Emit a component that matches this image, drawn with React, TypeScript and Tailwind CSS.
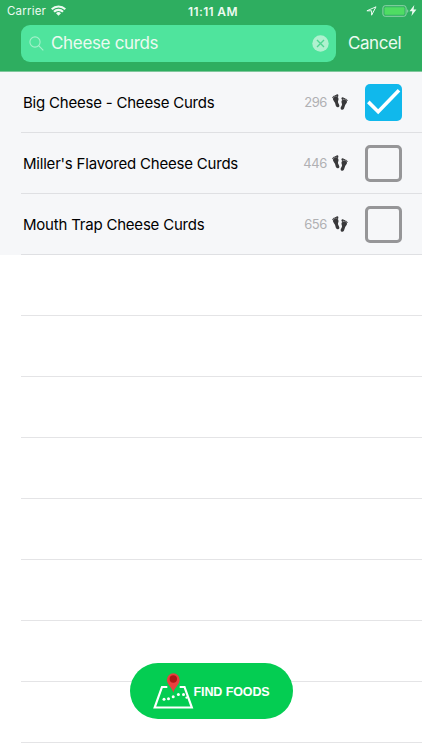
import React, { useState } from 'react';

interface Food {
  name: string;
  steps: number;
}

const FOODS: Food[] = [
  { name: 'Big Cheese - Cheese Curds', steps: 296 },
  { name: "Miller's Flavored Cheese Curds", steps: 446 },
  { name: 'Mouth Trap Cheese Curds', steps: 656 },
];

const EMPTY_ROWS = 9;

const StatusBar = () => (
  <div className="grid h-[21px] grid-cols-3 items-center pl-[7px] pr-[5px] text-[11.5px]">
    <div className="flex items-center gap-[5px]">
      <span className="pt-[2px] tracking-[0.2px]">Carrier</span>
      <svg className="h-[11px] w-[15px]" viewBox="0 0 15 11" fill="none" stroke="currentColor" strokeWidth="2.1">
        <path d="M0.7 4.3a9.6 9.6 0 0 1 13.6 0" />
        <path d="M3 6.8a6.3 6.3 0 0 1 9 0" />
        <path d="M7.5 10.8L5 8.3a3.6 3.6 0 0 1 5 0z" fill="currentColor" stroke="none" />
      </svg>
    </div>
    <span className="pl-[2px] pt-[2px] text-center text-[12px] font-semibold tracking-[0.35px]">11:11 AM</span>
    <div className="flex items-center justify-end">
      <svg className="mr-[5px] h-[10px] w-[11px]" viewBox="0 0 11 10" fill="none" stroke="currentColor" strokeLinejoin="round">
        <path d="M10 0.8L0.9 4.8H5.6V9.2z" />
      </svg>
      <svg className="h-[12px] w-[27px]" viewBox="0 0 27 12">
        <rect x="0.9" y="0.7" width="23.2" height="10.6" rx="2.3" fill="none" stroke="#8fd3a9" />
        <rect x="2.5" y="2.3" width="20" height="7.4" rx="1" fill="#4fdc63" />
        <path d="M25.2 4.2c1.5.5 1.5 3.1 0 3.6z" fill="#8fd3a9" />
      </svg>
      <svg className="h-[11px] w-[8px]" viewBox="0 0 7 10" fill="currentColor">
        <path d="M4.7 0L0.3 5.6h2.6L2.1 10l4.5-5.8H4z" />
      </svg>
    </div>
  </div>
);

const Footprints = () => (
  <svg className="h-[17px] w-[16px]" viewBox="0 0 16 17" fill="#38383a">
    {/* left foot */}
    <path d="M1.2 4C2.200 2.600 5.500 2.300 6.300 3.900c.8 1.600-.6 2.800-.3 4.300.3 1.300 1.700 2.400 1.300 4-.4 1.400-2.500 1.500-3.200.1-.6-1.300-.6-2.600-1.300-3.900C2.100 7.200.3 5.500 1.200 4z" />
    <ellipse cx="5.200" cy="1.700" rx="1.200" ry="1.400" />
    <circle cx="3.300" cy="1.900" r="0.850" />
    <circle cx="1.900" cy="2.500" r="0.750" />
    <circle cx="0.900" cy="3.500" r="0.650" />
    {/* right foot */}
    <path d="M14.800 6.900c-1-1.400-4.300-1.700-5.100-.1-.8 1.500.5 2.600.3 4-.3 1.300-1.700 2.400-1.300 3.900.4 1.400 2.500 1.500 3.200.1.600-1.300.6-2.600 1.300-3.900.7-1.200 2.500-2.500 1.600-4z" />
    <ellipse cx="10.700" cy="4.600" rx="1.200" ry="1.400" />
    <circle cx="12.600" cy="4.800" r="0.850" />
    <circle cx="14" cy="5.400" r="0.750" />
    <circle cx="15" cy="6.400" r="0.650" />
  </svg>
);

const MapIcon = () => (
  <svg className="h-[38px] w-[41px] shrink-0" viewBox="0 0 41 38" fill="none">
    <path d="M14.300 15H9L1.700 35.500H38.800L31.500 15H26.700" stroke="#fff" strokeWidth="2.200" />
    <g fill="#fff">
      <circle cx="11" cy="27.300" r="1.500" />
      <circle cx="15.500" cy="26.800" r="1.500" />
      <circle cx="20.200" cy="24.700" r="1.500" />
      <circle cx="25.400" cy="22.500" r="1.500" />
      <circle cx="30.500" cy="22.500" r="1.500" />
      <circle cx="33.600" cy="25.600" r="1.200" />
    </g>
    <path d="M20.300 20.700C19 15.500 13.900 12.500 13.900 7.800a6.400 6.600 0 0 1 12.800 0C26.700 12.500 21.600 15.500 20.300 20.700z" fill="#e93f3f" />
    <circle cx="20.300" cy="7" r="3.700" fill="#ac1616" />
  </svg>
);

const Checkbox = ({ checked, onClick }: { checked: boolean; onClick: () => void }) => (
  <button
    type="button"
    role="checkbox"
    aria-checked={checked}
    onClick={onClick}
    className={`h-[37px] w-[37px] shrink-0 rounded-[5px] ${checked ? 'bg-[#10b8ec]' : 'border-[3px] border-[#969698]'}`}
  >
    {checked && (
      <svg className="h-[37px] w-[37px]" viewBox="0 0 37 37" fill="none" stroke="#fff" strokeWidth="3.6">
        <path d="M3.300 17.900L13.200 27.700L34 6.300" />
      </svg>
    )}
  </button>
);

const App: React.FC = () => {
  const [query, setQuery] = useState('Cheese curds');
  const [selected, setSelected] = useState<string[]>([FOODS[0].name]);

  const toggle = (name: string) => {
    setSelected((prev) => (prev.includes(name) ? prev.filter((n) => n !== name) : [...prev, name]));
  };

  return (
    <div className="relative h-[750px] w-[422px] overflow-hidden bg-white font-['Inter',sans-serif]">
      {/* Header */}
      <header className="h-[72px] border-b border-[#7fc79c] bg-[#2eae60] text-[#ecfaf1]">
        <StatusBar />
        <div className="flex items-center pl-[21px] pt-[3.5px]">
          <div className="flex h-[37px] w-[315px] items-center rounded-[9px] bg-[#4fe49d] pl-[8px] pr-[7px]">
            <svg className="h-[15px] w-[15px] shrink-0" viewBox="0 0 15 15" fill="none" stroke="#a5f1cb" strokeWidth="1.100">
              <circle cx="6" cy="6" r="5.100" />
              <path d="M9.700 9.700L14.300 14.300" />
            </svg>
            <input
              className="ml-[7px] w-full min-w-0 bg-transparent pt-[2px] text-[17px] tracking-[-0.33px] outline-none"
              value={query}
              onChange={(e) => setQuery(e.target.value)}
            />
            <button type="button" onClick={() => setQuery('')} className="shrink-0">
              <svg className="h-[17px] w-[17px]" viewBox="0 0 17 17">
                <circle cx="8.500" cy="8.500" r="8.200" fill="#aff1cf" />
                <path d="M5 5l7 7M12 5l-7 7" stroke="#4fd692" strokeWidth="1.400" />
              </svg>
            </button>
          </div>
          <button type="button" className="ml-[12px] pt-[2px] text-[17px] tracking-[-0.45px]">Cancel</button>
        </div>
      </header>

      {/* Results */}
      <ul>
        {FOODS.map((food) => (
          <li key={food.name} className="h-[61px] bg-[#f6f7f9] pl-[21px]">
            <div className="flex h-full items-center border-b border-[#dfe0e3] pl-[2px] pr-[20.5px]">
              <span className="flex-1 pt-[2px] text-[15px] tracking-[-0.21px] text-black">{food.name}</span>
              <span className="mr-[5px] pt-px text-[13px] tracking-[-0.4px] text-[#b0b0b3]">{food.steps}</span>
              <Footprints />
              <div className="ml-[16.5px] flex">
                <Checkbox checked={selected.includes(food.name)} onClick={() => toggle(food.name)} />
              </div>
            </div>
          </li>
        ))}
        {Array.from({ length: EMPTY_ROWS }, (_, i) => (
          <li key={i} className="h-[61px] pl-[21px]">
            <div className="h-full border-b border-[#e4e4e6]" />
          </li>
        ))}
      </ul>

      <button
        type="button"
        className="absolute bottom-[31px] left-[129.5px] flex h-[56px] w-[163px] items-center rounded-full bg-[#04cd52] pl-[23px] text-white"
      >
        <MapIcon />
        <span className="whitespace-nowrap pt-[3px] font-['Liberation_Sans',sans-serif] text-[12.5px] font-bold tracking-[-0.1px]">FIND FOODS</span>
      </button>
    </div>
  );
};

export default App;
